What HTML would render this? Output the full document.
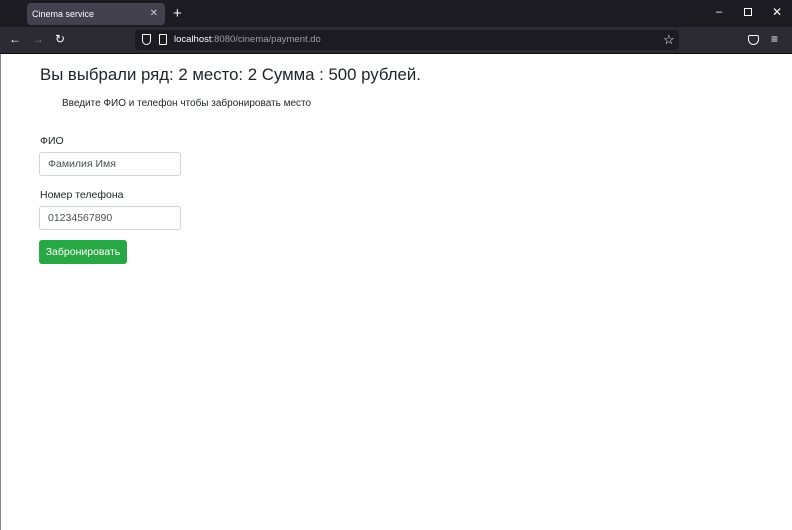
<!DOCTYPE html>
<html><head><meta charset="utf-8"><style>
*{margin:0;padding:0;box-sizing:border-box}
body{width:792px;height:530px;background:#fff;font-family:"Liberation Sans",sans-serif;position:relative;overflow:hidden}
.tb{position:absolute;left:0;top:0;width:792px;height:27px;background:#1c1b22}
.tab{position:absolute;left:27px;top:3px;width:138px;height:22px;background:#42414d;border-radius:4px;color:#fbfbfe;font-size:9px;line-height:22px;padding-left:5px}
.tab span{position:absolute;right:7px;top:0;color:#ccc;font-size:10px}
.tool{position:absolute;left:0;top:27px;width:792px;height:26px;background:#2b2a33}
.url{position:absolute;left:135px;top:30px;width:544px;height:20px;background:#1c1b22;border-radius:4px;color:#fbfbfe;font-size:9.5px;line-height:20px;padding-left:39px}
.url i{font-style:normal;color:#9e9ea6}
.ic{position:absolute;color:#fbfbfe;font-size:12px}
.line{position:absolute;left:0;top:53px;width:792px;height:1px;background:#0c0c0d}
.c{position:absolute;color:#212529}
h1{position:absolute;left:40px;top:65px;font-weight:400;font-size:16.8px;color:#212529;white-space:nowrap}
.inp{position:absolute;left:39px;width:142px;height:24px;border:1px solid #ced4da;border-radius:3px;font-size:10.5px;color:#495057;line-height:22px;padding-left:8px}
.btn{position:absolute;left:39px;top:240px;width:88px;height:24px;background:#28a745;border-radius:3px;color:#fff;font-size:10.5px;line-height:24px;text-align:center}
.lb{position:absolute;left:0;top:54px;width:1px;height:476px;background:#888}
</style></head><body>
<div class="tb"></div>
<div class="tab">Cinema service<span>✕</span></div>
<div class="ic" style="left:173px;top:5px;font-size:15px">+</div>
<div class="ic" style="left:716px;top:6px;font-size:11px">–</div>
<div class="ic" style="left:744px;top:8px;width:8px;height:8px;border:1px solid #fbfbfe"></div>
<div class="ic" style="left:772px;top:5px;font-size:12px">✕</div>
<div class="tool"></div>
<div class="ic" style="left:9px;top:32px">←</div>
<div class="ic" style="left:32px;top:32px;color:#777">→</div>
<div class="ic" style="left:55px;top:32px">↻</div>
<div class="url">localhost<i>:8080/cinema/payment.do</i></div>
<div class="ic" style="left:142px;top:34px;width:9px;height:11px;border:1.5px solid #fbfbfe;border-radius:1px 1px 5px 5px"></div>
<div class="ic" style="left:159px;top:34px;width:8px;height:11px;border:1.5px solid #fbfbfe;border-radius:1px"></div>
<div class="ic" style="left:663px;top:32px;font-size:13px">☆</div>
<div class="ic" style="left:748px;top:35px;width:11px;height:10px;border:1.5px solid #fbfbfe;border-radius:2px 2px 6px 6px"></div>
<div class="ic" style="left:771px;top:32px;font-size:12px">≡</div>
<div class="line"></div>
<div class="lb"></div>
<h1>Вы выбрали ряд: 2 место: 2 Сумма : 500 рублей.</h1>
<div class="c" style="left:62px;top:98px;font-size:10px">Введите ФИО и телефон чтобы забронировать место</div>
<div class="c" style="left:40px;top:135px;font-size:10.5px">ФИО</div>
<div class="inp" style="top:152px">Фамилия Имя</div>
<div class="c" style="left:40px;top:189px;font-size:10.5px">Номер телефона</div>
<div class="inp" style="top:206px">01234567890</div>
<div class="btn">Забронировать</div>
</body></html>
